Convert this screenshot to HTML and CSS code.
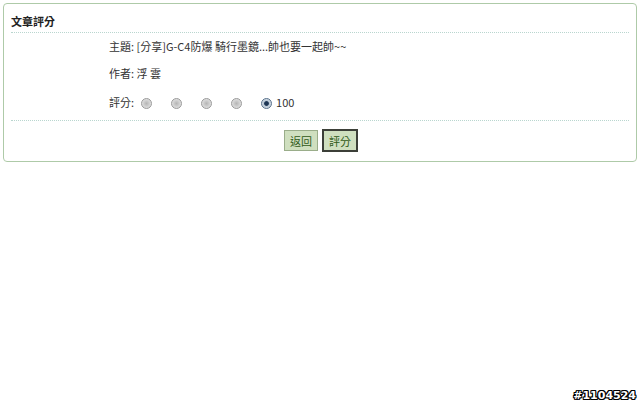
FILE: index.html
```html
<!DOCTYPE html>
<html lang="zh-Hant">
<head>
    <meta charset="UTF-8">
    <meta name="viewport" content="width=device-width, initial-scale=1.0">
    <title>文章評分</title>
    <link rel="stylesheet" href="styles.css">
</head>
<body>
    <form class="rate-box">
        <h3 class="rate-title">文章評分</h3>
        <div class="rate-body">
            <div class="rate-row">主題: [分享]G-C4防爆 騎行墨鏡...帥也要一起帥~~</div>
            <div class="rate-row">作者: 浮 雲</div>
            <div class="rate-row">
                <span>評分:</span>
                <label class="score"><input type="radio" name="score" value="20"></label>
                <label class="score"><input type="radio" name="score" value="40"></label>
                <label class="score"><input type="radio" name="score" value="60"></label>
                <label class="score"><input type="radio" name="score" value="80"></label>
                <label class="score"><input type="radio" name="score" value="100" checked> 100</label>
            </div>
        </div>
        <div class="rate-actions">
            <button type="button" class="btn">返回</button>
            <button type="submit" class="btn btn-default">評分</button>
        </div>
    </form>
    <div class="watermark">#1104524</div>
</body>
</html>
```

FILE: styles.css
```css
body {
    margin: 3px 3px;
    font-family: "Noto Sans CJK TC", "DejaVu Sans", sans-serif;
    font-size: 11px;
    color: #333;
    background: #fff;
}

.rate-box {
    border: 1px solid #aecaa8;
    border-radius: 4px;
    padding: 0 7px 0 7px;
    height: 157px;
    box-sizing: content-box;
}

.rate-title {
    margin: 0;
    padding: 9px 0 0 0;
    height: 19px;
    font-size: 11px;
    font-weight: bold;
    color: #222;
    border-bottom: 1px dotted #b9d6cf;
}

.rate-body {
    padding: 0 0 3px 98px;
    border-bottom: 1px dotted #b9d6cf;
}

.rate-row {
    height: 27px;
    line-height: 27px;
    display: flex;
    align-items: center;
}

.rate-row:last-child {
    height: 30px;
}

.score {
    display: inline-flex;
    align-items: center;
    margin-left: 7px;
    margin-right: 8px;
}

.score input {
    appearance: none;
    -webkit-appearance: none;
    width: 11px;
    height: 11px;
    margin: 2px 4px 0 0;
    border: 1px solid #9a9a9a;
    border-radius: 50%;
    background: radial-gradient(circle at 50% 50%, #b5b5b5 0, #cfcfcf 45%, #eeeeee 100%);
}

.score input:checked {
    border-color: #566f8a;
    background: radial-gradient(circle at 50% 50%, #1d3554 0, #1d3554 30%, #b8c6d4 45%, #eef2f6 100%);
}

.rate-actions {
    display: flex;
    justify-content: center;
    align-items: flex-start;
    gap: 4px;
    padding-top: 9px;
    padding-left: 2px;
}

.btn {
    font-family: inherit;
    font-size: 11px;
    color: #2f5a17;
    background: #cfdfbf;
    border: 1px solid #9aad8a;
    padding: 0 5px;
    height: 21px;
    cursor: pointer;
}

.btn-default {
    border: 2px solid #3c3f38;
    height: 23px;
    margin-top: -1px;
    padding: 0 5px;
}

.watermark {
    position: absolute;
    right: 4px;
    bottom: 2px;
    font-family: "DejaVu Sans", sans-serif;
    font-weight: bold;
    font-size: 11px;
    color: #fff;
    text-shadow: 1px 0 0 #000, -1px 0 0 #000, 0 1px 0 #000, 0 -1px 0 #000,
        1px 1px 0 #000, -1px -1px 0 #000, 1px -1px 0 #000, -1px 1px 0 #000;
}
```
